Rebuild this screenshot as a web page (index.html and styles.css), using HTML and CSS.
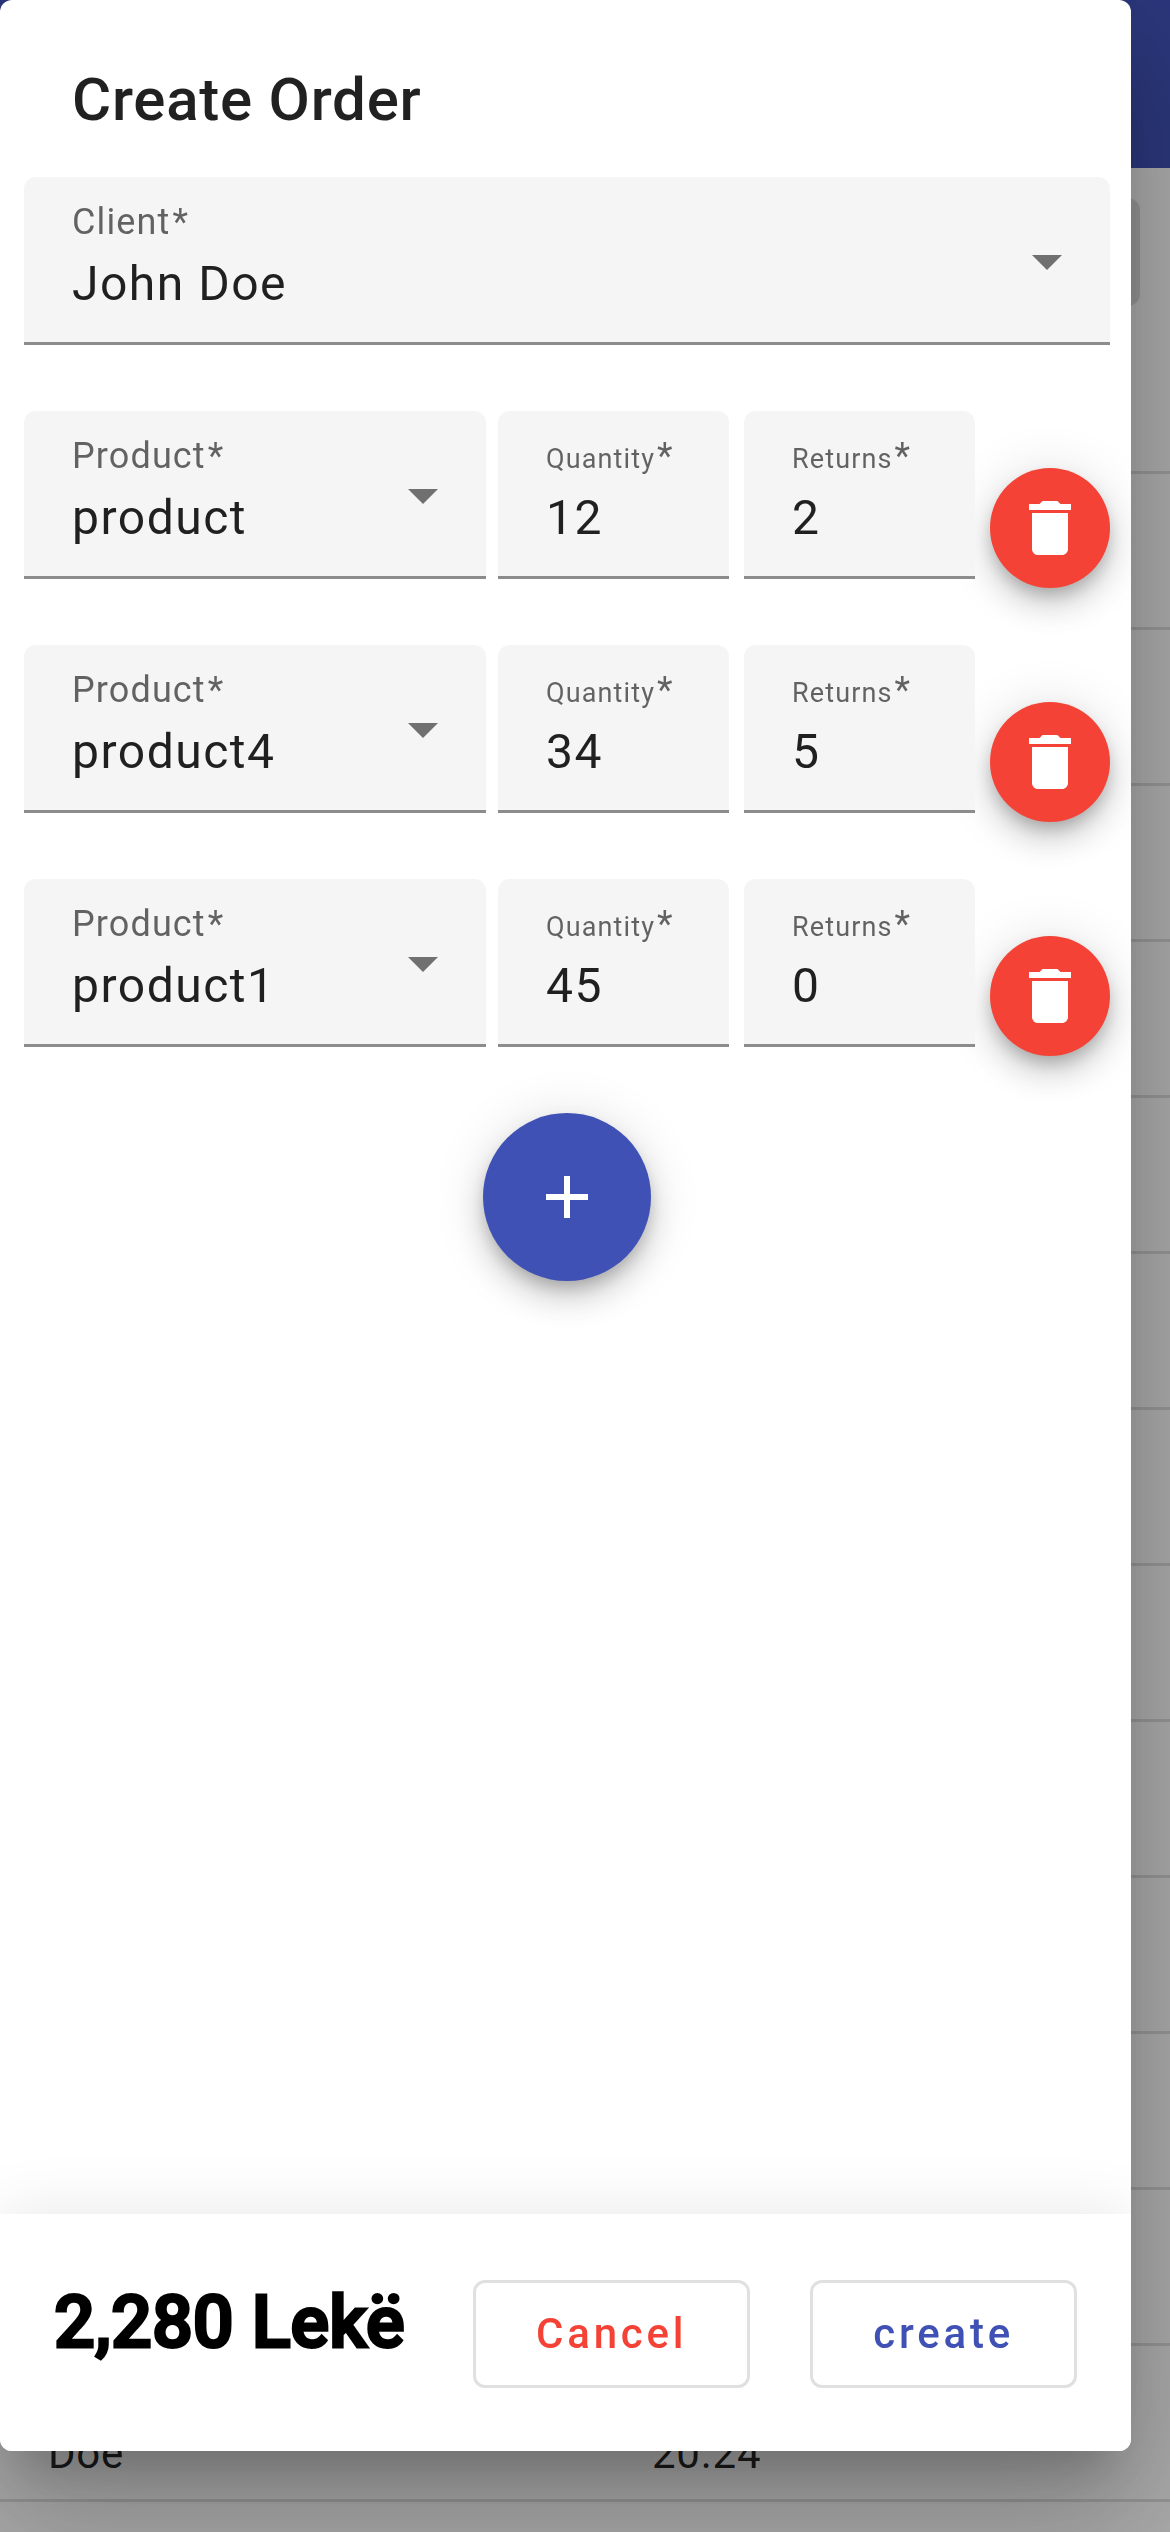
FILE: index.html
```html
<!DOCTYPE html>
<html lang="en">
<head>
<meta charset="utf-8">
<meta name="viewport" content="width=device-width, initial-scale=1">
<title>Create Order</title>
<link rel="stylesheet" href="styles.css">
</head>
<body>
<svg class="sprite" aria-hidden="true">
  <symbol id="icon-delete" viewBox="0 0 24 24"><path d="M6 19c0 1.1.9 2 2 2h8c1.1 0 2-.9 2-2V7H6v12zM19 4h-3.5l-1-1h-5l-1 1H5v2h14V4z"/></symbol>
  <symbol id="icon-add" viewBox="0 0 24 24"><path d="M19 13h-6v6h-2v-6H5v-2h6V5h2v6h6v2z"/></symbol>
  <symbol id="icon-arrow" viewBox="0 0 10 5"><path d="M0 0h10L5 5z"/></symbol>
</svg>

<div class="page">
  <header class="toolbar"></header>
  <div class="filters"><div class="filter"></div></div>
  <table class="orders">
    <tbody>
      <tr><td></td><td></td></tr>
      <tr><td></td><td></td></tr>
      <tr><td></td><td></td></tr>
      <tr><td></td><td></td></tr>
      <tr><td></td><td></td></tr>
      <tr><td></td><td></td></tr>
      <tr><td></td><td></td></tr>
      <tr><td></td><td></td></tr>
      <tr><td></td><td></td></tr>
      <tr><td></td><td></td></tr>
      <tr><td></td><td></td></tr>
      <tr><td></td><td></td></tr>
      <tr><td></td><td></td></tr>
      <tr><td>Doe</td><td>20.24</td></tr>
    </tbody>
  </table>
</div>
<div class="backdrop"></div>

<form class="dialog" role="dialog" aria-labelledby="dialog-title">
  <h2 class="dialog-title" id="dialog-title">Create Order</h2>
  <div class="dialog-content">
    <div class="field">
      <label class="field-label" for="client">Client<span class="required">*</span></label>
      <select class="field-control" id="client"><option>John Doe</option></select>
      <svg class="field-arrow" aria-hidden="true"><use href="#icon-arrow"/></svg>
    </div>

    <div class="order-row">
      <div class="field field-product">
        <label class="field-label" for="product-1">Product<span class="required">*</span></label>
        <select class="field-control" id="product-1"><option>product</option></select>
        <svg class="field-arrow" aria-hidden="true"><use href="#icon-arrow"/></svg>
      </div>
      <div class="field field-number">
        <label class="field-label" for="quantity-1"><span class="small">Quantity</span><span class="required">*</span></label>
        <input class="field-control" id="quantity-1" type="text" inputmode="numeric" value="12">
      </div>
      <div class="field field-number">
        <label class="field-label" for="returns-1"><span class="small">Returns</span><span class="required">*</span></label>
        <input class="field-control" id="returns-1" type="text" inputmode="numeric" value="2">
      </div>
      <button class="fab fab-mini" type="button" aria-label="Delete"><svg class="icon"><use href="#icon-delete"/></svg></button>
    </div>

    <div class="order-row">
      <div class="field field-product">
        <label class="field-label" for="product-2">Product<span class="required">*</span></label>
        <select class="field-control" id="product-2"><option>product4</option></select>
        <svg class="field-arrow" aria-hidden="true"><use href="#icon-arrow"/></svg>
      </div>
      <div class="field field-number">
        <label class="field-label" for="quantity-2"><span class="small">Quantity</span><span class="required">*</span></label>
        <input class="field-control" id="quantity-2" type="text" inputmode="numeric" value="34">
      </div>
      <div class="field field-number">
        <label class="field-label" for="returns-2"><span class="small">Returns</span><span class="required">*</span></label>
        <input class="field-control" id="returns-2" type="text" inputmode="numeric" value="5">
      </div>
      <button class="fab fab-mini" type="button" aria-label="Delete"><svg class="icon"><use href="#icon-delete"/></svg></button>
    </div>

    <div class="order-row">
      <div class="field field-product">
        <label class="field-label" for="product-3">Product<span class="required">*</span></label>
        <select class="field-control" id="product-3"><option>product1</option></select>
        <svg class="field-arrow" aria-hidden="true"><use href="#icon-arrow"/></svg>
      </div>
      <div class="field field-number">
        <label class="field-label" for="quantity-3"><span class="small">Quantity</span><span class="required">*</span></label>
        <input class="field-control" id="quantity-3" type="text" inputmode="numeric" value="45">
      </div>
      <div class="field field-number">
        <label class="field-label" for="returns-3"><span class="small">Returns</span><span class="required">*</span></label>
        <input class="field-control" id="returns-3" type="text" inputmode="numeric" value="0">
      </div>
      <button class="fab fab-mini" type="button" aria-label="Delete"><svg class="icon"><use href="#icon-delete"/></svg></button>
    </div>

    <button class="fab fab-add" type="button" aria-label="Add product"><svg class="icon"><use href="#icon-add"/></svg></button>
  </div>

  <footer class="dialog-actions">
    <strong class="total">2,280 Lekë</strong>
    <div class="buttons">
      <button class="button button-warn" type="button">Cancel</button>
      <button class="button button-primary" type="submit">create</button>
    </div>
  </footer>
</form>
</body>
</html>
```
FILE: styles.css
```css
* {
  box-sizing: border-box;
}

body {
  margin: 0;
  height: 100vh;
  overflow: hidden;
  background: #fafafa;
  color: rgba(0, 0, 0, 0.87);
  font-family: Roboto, "Liberation Sans", sans-serif;
}

.sprite {
  position: absolute;
  width: 0;
  height: 0;
}

/* Orders page under the dialog */

.toolbar {
  height: 168px;
  background: #3f51b5;
}

.filters {
  padding: 30px 30px 12px;
}

.filter {
  height: 108px;
  border-radius: 12px;
  background: rgba(0, 0, 0, 0.12);
}

.orders {
  width: 100%;
  border-collapse: separate;
  border-spacing: 0;
  table-layout: fixed;
  font-size: 42px;
  line-height: 60px;
  letter-spacing: 0.018em;
}

.orders td {
  height: 156px;
  padding: 0 48px 15px;
  border-bottom: 3px solid rgba(0, 0, 0, 0.12);
  vertical-align: bottom;
}

.orders td + td {
  padding-left: 67px;
}

.backdrop {
  position: fixed;
  inset: 0;
  background: rgba(0, 0, 0, 0.32);
}

/* Dialog */

.dialog {
  position: fixed;
  inset: 0 39px 81px 0;
  display: flex;
  flex-direction: column;
  overflow: hidden;
  border-radius: 12px;
  background: #fff;
  box-shadow:
    0 33px 45px -21px rgba(0, 0, 0, 0.2),
    0 72px 114px 9px rgba(0, 0, 0, 0.14),
    0 27px 138px 24px rgba(0, 0, 0, 0.12);
}

.dialog-title {
  margin: 0;
  padding: 64px 72px 41px;
  font-size: 60px;
  font-weight: 500;
  line-height: 72px;
  letter-spacing: 0.0125em;
}

.dialog-content {
  flex: 1;
  padding: 0 21px 0 24px;
}

.field {
  position: relative;
  display: flex;
  flex-direction: column;
  gap: 13px;
  height: 168px;
  margin-bottom: 66px;
  padding: 24px 48px 0;
  border-bottom: 3px solid #8c8c8c;
  border-radius: 12px 12px 0 0;
  background: #f5f5f5;
}

.field-label {
  height: 42px;
  color: rgba(0, 0, 0, 0.6);
  font-size: 36px;
  line-height: 42px;
  letter-spacing: 0.03125em;
  white-space: nowrap;
}

.field-label .small {
  font-size: 27px;
}

.field-label .required {
  margin-left: 2px;
}

.field-control {
  width: 100%;
  height: 56px;
  margin: 0;
  padding: 0;
  border: 0;
  outline: 0;
  appearance: none;
  background: none;
  color: rgba(0, 0, 0, 0.87);
  font: 400 48px/56px Roboto, "Liberation Sans", sans-serif;
  letter-spacing: 0.03125em;
}

.field-arrow {
  position: absolute;
  top: 78px;
  right: 48px;
  width: 30px;
  height: 15px;
  fill: rgba(0, 0, 0, 0.54);
  pointer-events: none;
}

.order-row {
  display: flex;
  align-items: center;
}

/* Half of what the gaps (42px) and the delete button (120px) leave */
.field-product {
  flex: none;
  width: calc((100% - 162px) / 2);
  margin-right: 12px;
}

.field-number {
  flex: 1 1 0;
  min-width: 0;
  margin-right: 15px;
}

.fab {
  display: flex;
  flex: none;
  align-items: center;
  justify-content: center;
  width: 168px;
  height: 168px;
  padding: 0;
  border: 0;
  border-radius: 50%;
  background: #3f51b5;
  box-shadow:
    0 9px 15px -3px rgba(0, 0, 0, 0.2),
    0 18px 30px 0 rgba(0, 0, 0, 0.14),
    0 3px 54px 0 rgba(0, 0, 0, 0.12);
}

.fab-mini {
  width: 120px;
  height: 120px;
  background: #f44336;
}

.fab-add {
  margin: 0 auto;
}

.icon {
  width: 72px;
  height: 72px;
  fill: #fff;
}

.dialog-actions {
  display: flex;
  align-items: flex-start;
  justify-content: space-between;
  padding: 66px 54px 63px;
  background: #fff;
  box-shadow: 0 0 60px rgba(0, 0, 0, 0.1);
}

.total {
  color: #000;
  font-size: 72px;
  font-weight: 500;
  line-height: 86px;
  white-space: nowrap;
  -webkit-text-stroke: 3px #000;
}

.buttons {
  display: flex;
  gap: 60px;
}

.button {
  height: 108px;
  padding: 0 60px;
  border: 3px solid #e0e0e0;
  border-radius: 12px;
  background: #fff;
  font: 500 42px/48px Roboto, "Liberation Sans", sans-serif;
  letter-spacing: 0.09em;
}

.button-warn {
  color: #f44336;
}

.button-primary {
  color: #3f51b5;
}
```
